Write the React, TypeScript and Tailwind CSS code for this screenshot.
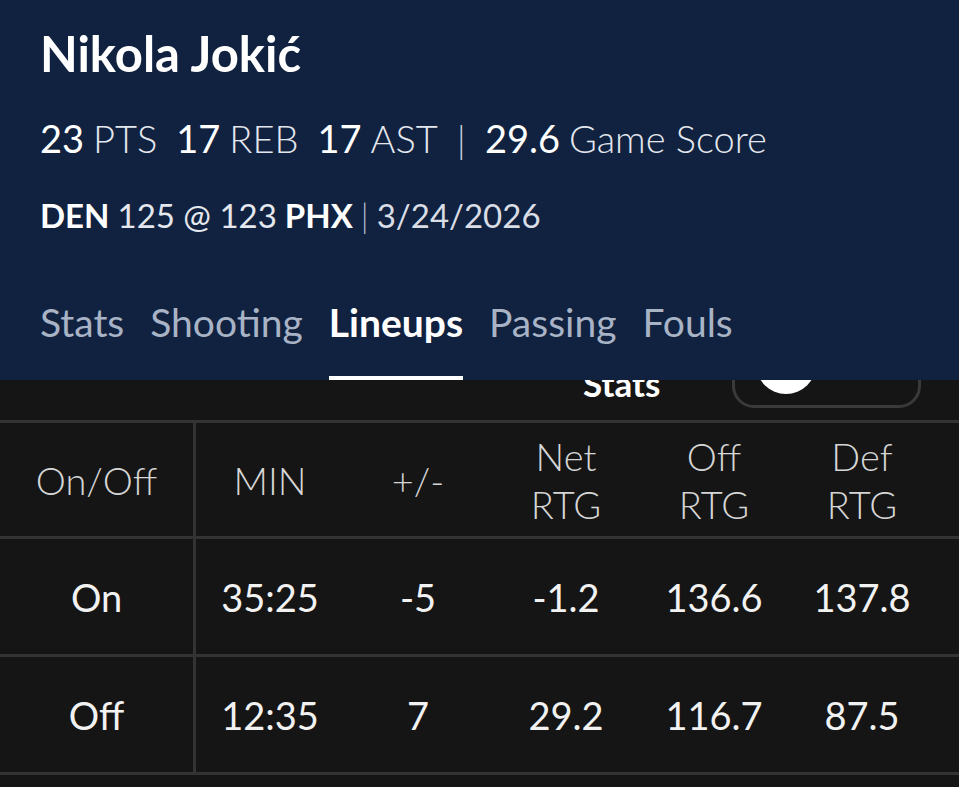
const tabs = ['Stats', 'Shooting', 'Lineups', 'Passing', 'Fouls']

const headers = [['On/Off'], ['MIN'], ['+/-'], ['Net', 'RTG'], ['Off', 'RTG'], ['Def', 'RTG']]

const rows = [
  ['On', '35:25', '-5', '-1.2', '136.6', '137.8'],
  ['Off', '12:35', '7', '29.2', '116.7', '87.5']
]

function StatPair({ value, label }: { value: string; label: string }) {
  return (
    <span className="flex items-baseline gap-[9px]">
      <span className="font-normal text-white">{value}</span>
      <span className="font-light text-[#e4e7ee]">{label}</span>
    </span>
  )
}

function Cell({ first, children, className }: { first: boolean; children: React.ReactNode; className?: string }) {
  return (
    <div
      className={`flex items-center justify-center ${first ? 'w-[196px] border-r-[3px] border-[#333333]' : 'w-[148px]'} ${className ?? ''}`}
    >
      {children}
    </div>
  )
}

export default function App() {
  return (
    <div className="w-[959px] h-[787px] overflow-hidden bg-[#151515] font-['Lato','Noto_Sans',sans-serif]">
      <header className="relative z-10 bg-[#10223f] px-10 pt-[29px]">
        <h1 className="text-[49px] leading-none font-bold text-white">Nikola Jokić</h1>

        <div className="mt-[41px] flex items-baseline gap-[19px] text-[38px] leading-none">
          <StatPair value="23" label="PTS" />
          <StatPair value="17" label="REB" />
          <StatPair value="17" label="AST" />
          <span className="font-light text-[#c9ceda]">|</span>
          <StatPair value="29.6" label="Game Score" />
        </div>

        <div className="mt-[42px] flex items-baseline gap-[8px] text-[33px] leading-none text-[#e4e7ee]">
          <span className="font-bold text-white">DEN</span>
          <span className="font-normal">125 @ 123</span>
          <span className="font-bold text-white">PHX</span>
          <span className="font-light text-[#b7bfce]">|</span>
          <span className="font-normal text-[#d9dde6]">3/24/2026</span>
        </div>

        <nav className="mt-[71px] flex gap-[26px] text-[39px] leading-none">
          {tabs.map(tab => (
            <div
              key={tab}
              className={
                tab === 'Lineups'
                  ? 'pb-[34px] border-b-4 border-white font-bold text-white'
                  : 'pb-[38px] text-[#a9b3c6]'
              }
            >
              {tab}
            </div>
          ))}
        </nav>
      </header>

      {/* half-scrolled row, partly hidden under the header */}
      <div className="flex h-[40px] items-start">
        <span className="ml-[583px] -mt-[14px] text-[35px] leading-none font-bold text-white">Stats</span>
        <div className="ml-[72px] -mt-[52px] h-[80px] w-[189px] rounded-[22px] border-[3px] border-[#3a3a3a] pl-[21px] pt-[3px]">
          <div className="h-[60px] w-[60px] rounded-full bg-white" />
        </div>
      </div>

      <div className="border-t-[3px] border-[#333333] text-[38px]">
        <div className="flex h-[116px] border-b-[3px] border-[#333333] font-light leading-[48px] text-[#d6d6d6]">
          {headers.map((h, i) => (
            <Cell key={i} first={i === 0} className="flex-col">
              {h.map(line => (
                <span key={line}>{line}</span>
              ))}
            </Cell>
          ))}
        </div>
        {rows.map(r => (
          <div key={r[0]} className="flex h-[118px] border-b-[3px] border-[#333333] leading-none text-[#f2f2f2]">
            {r.map((v, i) => (
              <Cell key={i} first={i === 0}>
                {v}
              </Cell>
            ))}
          </div>
        ))}
      </div>
    </div>
  )
}
